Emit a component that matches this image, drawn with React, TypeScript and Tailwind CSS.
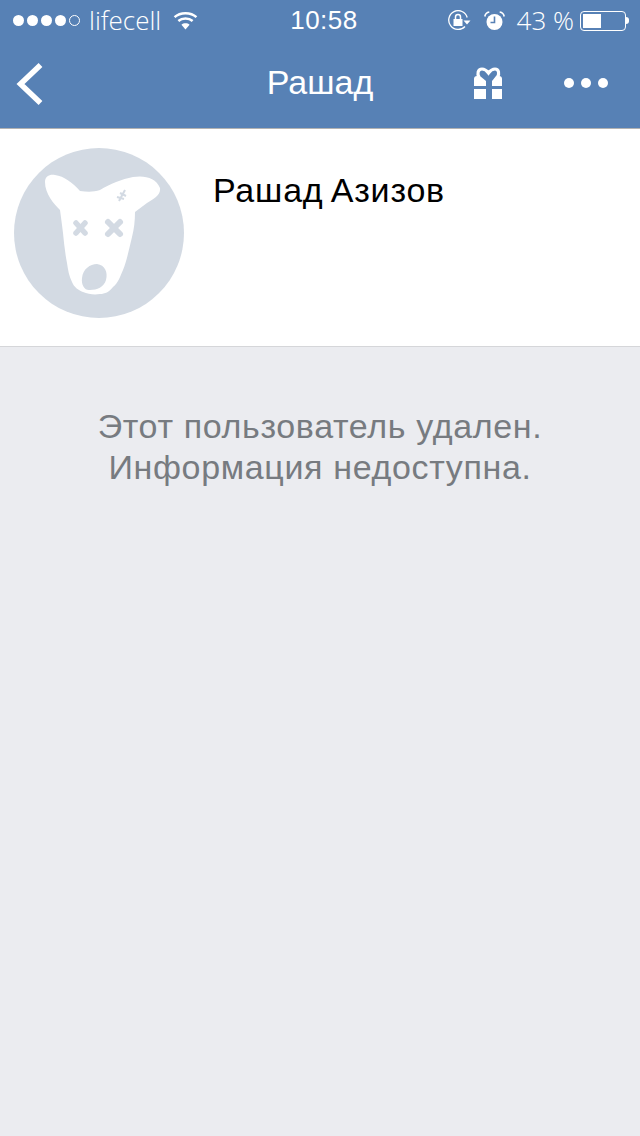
function SignalDots() {
  return (
    <div className="flex items-center gap-[3px]">
      {[0, 1, 2, 3].map((i) => (
        <div key={i} className="w-[11px] h-[11px] rounded-full bg-white" />
      ))}
      <div className="w-[11px] h-[11px] rounded-full border border-white" />
    </div>
  );
}

function Wifi() {
  return (
    <svg width="25" height="19" viewBox="0 0 26 20" fill="none" stroke="white" strokeWidth="2.6">
      <path d="M1.5 6.5C7.5 1 18.5 1 24.5 6.5" />
      <path d="M5.5 10.5C9.5 7 16.5 7 20.5 10.5" />
      <path d="M13 19.500L8.700 14.500C11 12.500 15 12.500 17.300 14.500Z" fill="white" stroke="none" />
    </svg>
  );
}

function RotationLock() {
  return (
    <svg width="24" height="21" viewBox="0 0 24 21" fill="none">
      <path d="M19.200 7.500A9.400 9.400 0 1 0 17 16.500" stroke="white" strokeWidth="1.300" />
      <path d="M15.500 10.500H22.500L19 14.500Z" fill="white" />
      <rect x="5.500" y="9" width="9" height="7" fill="white" />
      <path d="M7.500 9V7a2.500 2.500 0 0 1 5 0V9" stroke="white" strokeWidth="1.500" />
    </svg>
  );
}

function Alarm() {
  return (
    <svg width="21" height="20" viewBox="0 0 21 20" fill="none">
      <circle cx="10.500" cy="11" r="8" fill="white" />
      <path d="M10.500 5.500V11.500H6.500" stroke="#5781b5" strokeWidth="1.600" />
      <path d="M0.800 5.500C1.200 3 2.800 1.400 5.300 1" stroke="white" strokeWidth="1.600" />
      <path d="M20.200 5.500C19.800 3 18.200 1.400 15.700 1" stroke="white" strokeWidth="1.600" />
    </svg>
  );
}

function BackChevron() {
  return (
    <svg width="30" height="46" viewBox="0 0 30 46" fill="none" stroke="white" strokeWidth="5.5" strokeLinejoin="miter">
      <path d="M25.500 4L5.500 23L25.500 42" />
    </svg>
  );
}

function Gift() {
  return (
    <svg width="28" height="32" viewBox="0 0 28 32" fill="white">
      <path
        d="M5 10C3 7 3.800 2 8 2C11 2 13 4 14.500 6C16 4 18 2 21 2C25 2 25.500 7 23.500 10"
        fill="none"
        stroke="white"
        strokeWidth="3.200"
      />
      <path d="M0 19V12Q0 9 3 9H6L12 14V19Z" />
      <path d="M18 19V14L22 9H25Q28 9 28 12V19Z" />
      <rect x="0" y="22" width="12" height="10" />
      <rect x="18" y="22" width="10" height="10" />
    </svg>
  );
}

function DogAvatar() {
  return (
    <svg width="170" height="170" viewBox="14 148 170 170" className="shrink-0">
      <circle cx="99" cy="233" r="85" fill="#d3dae3" />
      <path
        d="M45 182C45 176 50 174 55 175C64 176 73 183 80 191C88 192 94 192 100 190C110 184 122 179 133 177C145 175 156 178 160 188C161 195 154 199 147 203C143 206 139 209 135 212C135 221 134 229 132 237C129 249 127 260 123 270C120 277 118 283 113 287C109 292 105 294 100 294C94 295 88 294 83 292C78 290 74 287 72 282C69 276 68 270 67 263C65 253 64 243 63 233C62 225 61 217 60 210C54 204 45 194 45 182Z"
        fill="white"
      />
      <g stroke="#d3dae3" strokeLinecap="round">
        <g strokeWidth="5.500">
          <path d="M76 223L85 233" />
          <path d="M85 223L76 233" />
        </g>
        <g strokeWidth="6">
          <path d="M108 222L120 234" />
          <path d="M120 222L108 234" />
        </g>
      </g>
      <g stroke="#d3dae3" fill="none" strokeWidth="2">
        <path d="M125 190L119 201" />
        <path d="M120 193L126 196" />
        <path d="M117 197L124 199" />
      </g>
      <path d="M82 278C83 269 90 264 97 264C105 265 108 272 106 280C104 287 97 290 90 290C85 291 81 285 82 278Z" fill="#d3dae3" />
    </svg>
  );
}

export default function App() {
  return (
    <div className="w-[640px] h-[1136px] flex flex-col bg-[#ebecf0] font-['Liberation_Sans',sans-serif] overflow-hidden">
      {/* Шапка */}
      <header className="h-[129px] shrink-0 bg-[#5781b5] border-b border-[#b2b2b2] flex flex-col text-white">
        <div className="h-[40px] flex items-center pl-[13px] pr-[11px] pt-[1px] relative text-[26px]">
          <SignalDots />
          <span className="ml-[9px] font-['Open_Sans',sans-serif] font-light text-[26px]">lifecell</span>
          <div className="ml-[12px]">
            <Wifi />
          </div>
          <span className="absolute left-[8px] right-0 text-center tracking-[0.5px]">10:58</span>
          <div className="ml-auto flex items-center">
            <RotationLock />
            <div className="ml-[12px]">
              <Alarm />
            </div>
            <span className="ml-[12px] font-['Open_Sans',sans-serif] font-light">43 %</span>
            <div className="ml-[6px] flex items-center">
              <div className="w-[46px] h-[20px] rounded-[4px] border border-white p-[2px]">
                <div className="w-[18px] h-full bg-white" />
              </div>
              <div className="w-[3px] h-[7px] bg-white rounded-r-sm" />
            </div>
          </div>
        </div>
        <div className="flex-1 flex items-center relative pl-[15px] pr-[32px] pb-[3px]">
          <div className="mt-[3px]">
            <BackChevron />
          </div>
          <span className="absolute left-0 right-0 text-center text-[34px]">Рашад</span>
          <div className="ml-auto mr-[62px]">
            <Gift />
          </div>
          <div className="flex gap-[7px]">
            <div className="w-[10px] h-[10px] rounded-full bg-white" />
            <div className="w-[10px] h-[10px] rounded-full bg-white" />
            <div className="w-[10px] h-[10px] rounded-full bg-white" />
          </div>
        </div>
      </header>

      {/* Профиль */}
      <section className="h-[218px] shrink-0 bg-white border-b border-[#d5d6d9] flex items-start pl-[14px] pt-[19px]">
        <DogAvatar />
        <h1 className="ml-[29px] mt-[22px] text-[34px] leading-[40px] tracking-[0.8px] [word-spacing:-3px] text-black">Рашад Азизов</h1>
      </section>

      <p className="mt-[59px] text-center text-[34px] leading-[41px] tracking-[0.65px] text-[#777b80]">
        Этот пользователь удален.
        <br />
        Информация недоступна.
      </p>
    </div>
  );
}
